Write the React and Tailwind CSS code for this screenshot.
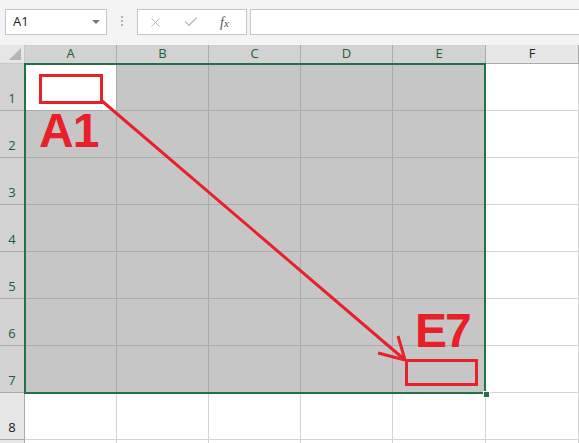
import { X, Check } from 'lucide-react'

const COLS = ['A', 'B', 'C', 'D', 'E', 'F']
const ROWS = [1, 2, 3, 4, 5, 6, 7, 8, 9]

function Toolbar() {
  return (
    <div className="flex items-start h-[45px] bg-[#f3f3f3] pt-[9px] pl-[5px]">
      <div className="flex items-center justify-between w-[102px] h-[26px] bg-white border border-[#c6c6c6] pl-[7px] pr-[6px]">
        <span className="text-[13px] text-[#222]">A1</span>
        <span className="w-0 h-0 border-l-[4px] border-r-[4px] border-t-[4px] border-l-transparent border-r-transparent border-t-[#777]" />
      </div>
      <div className="flex flex-col gap-[2px] w-[30px] items-center pt-[7px]">
        <span className="w-[2px] h-[2px] bg-[#b0b0b0]" />
        <span className="w-[2px] h-[2px] bg-[#b0b0b0]" />
        <span className="w-[2px] h-[2px] bg-[#b0b0b0]" />
      </div>
      <div className="flex items-center w-[110px] h-[26px] bg-white border border-[#c6c6c6] pl-[10px]">
        <X className="w-[15px] h-[15px] text-[#b8b8b8]" strokeWidth={1.6} />
        <Check className="w-[16px] h-[16px] text-[#b8b8b8] ml-[20px]" strokeWidth={2} />
        <span className="ml-[21px] text-[14px] italic text-[#555] font-['Liberation_Serif',serif]">
          f<span className="text-[11px]">x</span>
        </span>
      </div>
      <div className="flex-1 h-[26px] ml-[3px] bg-white border border-[#c6c6c6] border-r-0" />
    </div>
  )
}

function Row({ r }) {
  const sel = r <= 7
  return (
    <>
      <div
        className={`flex items-end justify-center pb-[2px] text-[13px] border-r border-b ${
          sel ? 'bg-[#d2d2d2] border-[#ababab] text-[#225c3a]' : 'bg-[#e6e6e6] border-[#ababab] text-[#222]'
        }`}
      >
        {r < 9 ? r : ''}
      </div>
      {COLS.map((c, i) => {
        const s = i < 5 && sel
        const a1 = i === 0 && r === 1
        return (
          <div
            key={c}
            className={`border-r border-b ${
              a1 ? 'bg-white border-[#ababab]' : s ? 'bg-[#c6c6c6] border-[#ababab]' : 'bg-white border-[#d4d4d4]'
            }`}
          />
        )
      })}
    </>
  )
}

function Sheet() {
  return (
    <div className="grid grid-cols-[25px_92px_92px_92px_92px_93px_93px] grid-rows-[19px_repeat(9,47px)]">
      <div className="relative bg-[#e6e6e6] border-r border-b border-[#c8c8c8]">
        <svg className="absolute right-[3px] bottom-[3px]" width="12" height="12" viewBox="0 0 12 12">
          <polygon points="12,0 12,12 0,12" fill="#b4b4b4" />
        </svg>
      </div>
      {COLS.map((c, i) => (
        <div
          key={c}
          className={`flex items-center justify-center text-[13px] border-r border-b ${
            i < 5 ? 'bg-[#d2d2d2] border-[#ababab] text-[#225c3a]' : 'bg-[#e6e6e6] border-[#ababab] text-[#222]'
          }`}
        >
          {c}
        </div>
      ))}
      {ROWS.map((r) => (
        <Row key={r} r={r} />
      ))}
    </div>
  )
}

export default function App() {
  return (
    <div className="relative w-[579px] h-[443px] overflow-hidden bg-white font-['Open_Sans','Liberation_Sans',sans-serif]">
      <Toolbar />
      <Sheet />

      {/* selection outline + fill handle */}
      <div className="absolute left-[24px] top-[63px] w-[462px] h-[331px] border-2 border-[#217346] pointer-events-none" />
      <div className="absolute left-[483px] top-[391px] w-[5px] h-[5px] bg-[#217346] border border-white box-content" />

      {/* red annotations */}
      <svg className="absolute left-0 top-0 pointer-events-none" width="579" height="443" viewBox="0 0 579 443">
        <g fill="none" stroke="#e8202a" strokeWidth="3">
          <rect x="40.5" y="75.5" width="61" height="27" />
          <line x1="102" y1="101" x2="405" y2="360" />
          <line x1="405" y1="360" x2="378" y2="353" />
          <line x1="405" y1="360" x2="398" y2="336" />
          <rect x="406.5" y="360.5" width="70" height="24" />
        </g>
      </svg>
      <span className="absolute left-[39px] top-[107px] text-[48px] leading-[48px] font-bold text-[#e8202a] font-['Liberation_Sans',Arial,sans-serif] tracking-[-1px]">
        A1
      </span>
      <span className="absolute left-[415px] top-[307px] text-[48px] leading-[48px] font-bold text-[#e8202a] font-['Liberation_Sans',Arial,sans-serif] tracking-[-2px]">
        E7
      </span>
    </div>
  )
}
